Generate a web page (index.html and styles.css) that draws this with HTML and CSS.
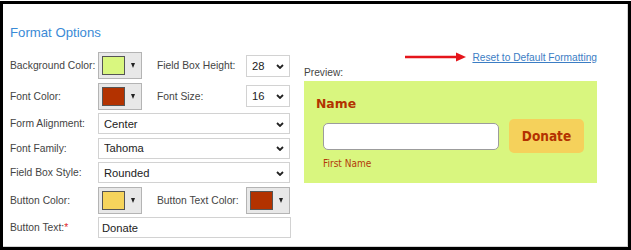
FILE: index.html
```html
<!DOCTYPE html>
<html lang="en">
<head>
  <meta charset="UTF-8">
  <meta name="viewport" content="width=device-width, initial-scale=1.0">
  <title>Format Options</title>
  <link rel="stylesheet" href="styles.css">
</head>
<body>
  <div class="frame">
    <!-- Left: formatting controls -->
    <div class="options">
      <h2 class="title">Format Options</h2>
      <div class="grid">
        <label>Background Color:</label>
        <button class="swatch-btn"><span class="swatch lime"></span><span class="caret"></span></button>
        <label class="label2">Field Box Height:</label>
        <span class="select-wrap">
          <select><option>28</option></select>
          <svg class="chev" width="8" height="5" viewBox="0 0 8 5"><polyline points="1,1 4,4 7,1"/></svg>
        </span>

        <label>Font Color:</label>
        <button class="swatch-btn"><span class="swatch rust"></span><span class="caret"></span></button>
        <label class="label2">Font Size:</label>
        <span class="select-wrap">
          <select><option>16</option></select>
          <svg class="chev" width="8" height="5" viewBox="0 0 8 5"><polyline points="1,1 4,4 7,1"/></svg>
        </span>

        <label>Form Alignment:</label>
        <span class="select-wrap wide">
          <select><option>Center</option></select>
          <svg class="chev" width="8" height="5" viewBox="0 0 8 5"><polyline points="1,1 4,4 7,1"/></svg>
        </span>

        <label>Font Family:</label>
        <span class="select-wrap wide">
          <select><option>Tahoma</option></select>
          <svg class="chev" width="8" height="5" viewBox="0 0 8 5"><polyline points="1,1 4,4 7,1"/></svg>
        </span>

        <label>Field Box Style:</label>
        <span class="select-wrap wide">
          <select><option>Rounded</option></select>
          <svg class="chev" width="8" height="5" viewBox="0 0 8 5"><polyline points="1,1 4,4 7,1"/></svg>
        </span>

        <label>Button Color:</label>
        <button class="swatch-btn"><span class="swatch gold"></span><span class="caret"></span></button>
        <label class="label2">Button Text Color:</label>
        <button class="swatch-btn"><span class="swatch rust"></span><span class="caret"></span></button>

        <label>Button Text:<span class="req">*</span></label>
        <input class="text-input wide" type="text" value="Donate">
      </div>
    </div>

    <!-- Right: live preview -->
    <div class="preview-col">
      <div class="reset-row">
        <svg class="arrow" width="62" height="10" viewBox="0 0 62 10">
          <line x1="0" y1="5" x2="52" y2="5" stroke="#e5151b" stroke-width="2.6"/>
          <polygon points="51,0.5 61,5 51,9.5" fill="#e5151b"/>
        </svg>
        <a href="#" class="reset-link">Reset to Default Formatting</a>
      </div>
      <div class="preview-label">Preview:</div>
      <div class="preview">
        <div class="pv-name">Name</div>
        <div class="pv-row">
          <div class="pv-field">
            <input class="pv-input" type="text">
            <div class="pv-sub">First Name</div>
          </div>
          <button class="pv-btn">Donate</button>
        </div>
      </div>
    </div>
  </div>
</body>
</html>
```

FILE: styles.css
```css
/* Page and outer frame */
body {
  margin: 0;
  font-family: "Liberation Sans", Arial, sans-serif;
  background: #fff;
  overflow: hidden;
}

.frame {
  margin-top: 1px;
  width: 631px;
  height: 249px;
  box-sizing: border-box;
  border: 3px solid #000;
  box-shadow: inset -1px -1px 0 #d4d4d4;
  background: #fff;
  display: flex;
}

/* Left column */
.options {
  padding: 21px 0 0 7px;
}

.title {
  margin: 0 0 11px;
  font-size: 13.2px;
  font-weight: normal;
  line-height: 16px;
  color: #3a8ad6;
}

.grid {
  display: grid;
  grid-template-columns: 88px 44px 15px 89px 44px;
  grid-template-rows: 27px 27px 21px 21px 21px 27px 21px;
  row-gap: 3.5px;
  align-items: center;
}

.grid label {
  grid-column: 1;
  font-size: 10.3px;
  line-height: 13px;
  color: #444;
  white-space: nowrap;
}

.grid .label2 {
  grid-column: 4;
}

.req {
  color: #e0262b;
}

.swatch-btn {
  width: 44px;
  height: 27px;
  box-sizing: border-box;
  margin: 0;
  padding: 0 0 0 3px;
  border: 1px solid #b4b4b4;
  background: #e8e8e8;
  display: flex;
  align-items: center;
}

.swatch {
  width: 23px;
  height: 19px;
  box-sizing: border-box;
  border: 1px solid #555;
}

.lime { background: #d9f77f; }
.rust { background: #b33200; }
.gold { background: #f6d45c; }

.caret {
  margin-left: 6px;
  width: 0;
  height: 0;
  border-left: 2.5px solid transparent;
  border-right: 2.5px solid transparent;
  border-top: 5px solid #222;
}

.select-wrap {
  position: relative;
  display: block;
  height: 22px;
}

.select-wrap.wide {
  grid-column: 2 / 6;
  height: 21px;
}

.select-wrap select {
  appearance: none;
  -webkit-appearance: none;
  width: 100%;
  height: 100%;
  box-sizing: border-box;
  margin: 0;
  padding: 0 0 0 5px;
  border: 1px solid #d2d2d2;
  border-radius: 0;
  background: #fff;
  font-family: "Liberation Sans", Arial, sans-serif;
  font-size: 11.2px;
  color: #222;
}

.chev {
  position: absolute;
  right: 6px;
  top: 50%;
  margin-top: -2px;
  fill: none;
  stroke: #222;
  stroke-width: 1.8;
}

.text-input.wide {
  grid-column: 2 / 6;
  width: 193px;
  height: 21px;
  box-sizing: border-box;
  margin: 0;
  padding: 0 0 0 3px;
  border: 1px solid #d2d2d2;
  font-family: "Liberation Sans", Arial, sans-serif;
  font-size: 11.2px;
  color: #222;
}

/* Right column */
.preview-col {
  margin-left: 14px;
  width: 293px;
  padding-top: 46.7px;
}

.reset-row {
  display: flex;
  justify-content: flex-end;
  align-items: center;
  height: 13px;
}

.arrow {
  margin-right: 5px;
}

.reset-link {
  font-size: 10.2px;
  line-height: 13px;
  color: #3b7dc4;
  text-decoration: underline;
}

.preview-label {
  margin-top: 2.3px;
  font-size: 10.2px;
  line-height: 13px;
  color: #444;
}

.preview {
  margin-top: 2px;
  height: 102px;
  box-sizing: border-box;
  padding: 15.2px 0 0 12px;
  background: #d9f67f;
}

.pv-name {
  font-family: "DejaVu Sans", Verdana, sans-serif;
  font-weight: bold;
  font-size: 12.4px;
  line-height: 15px;
  color: #b33200;
}

.pv-row {
  display: flex;
  align-items: flex-start;
  margin: 7.8px 0 0 7px;
}

.pv-field {
  padding-top: 4.3px;
}

.pv-input {
  display: block;
  width: 176px;
  height: 27px;
  box-sizing: border-box;
  margin: 0;
  border: 1px solid #9c9c9c;
  border-radius: 5px;
  background: #fff;
}

.pv-sub {
  margin-top: 7.8px;
  font-family: "DejaVu Sans Condensed", Tahoma, sans-serif;
  font-size: 10px;
  line-height: 12px;
  color: #b33a0a;
}

.pv-btn {
  margin-left: 10px;
  width: 75px;
  height: 34px;
  border: none;
  border-radius: 5px;
  background: #f5d15b;
  font-family: "DejaVu Sans Condensed", Tahoma, sans-serif;
  font-weight: bold;
  font-size: 13.5px;
  color: #b33200;
}
```
